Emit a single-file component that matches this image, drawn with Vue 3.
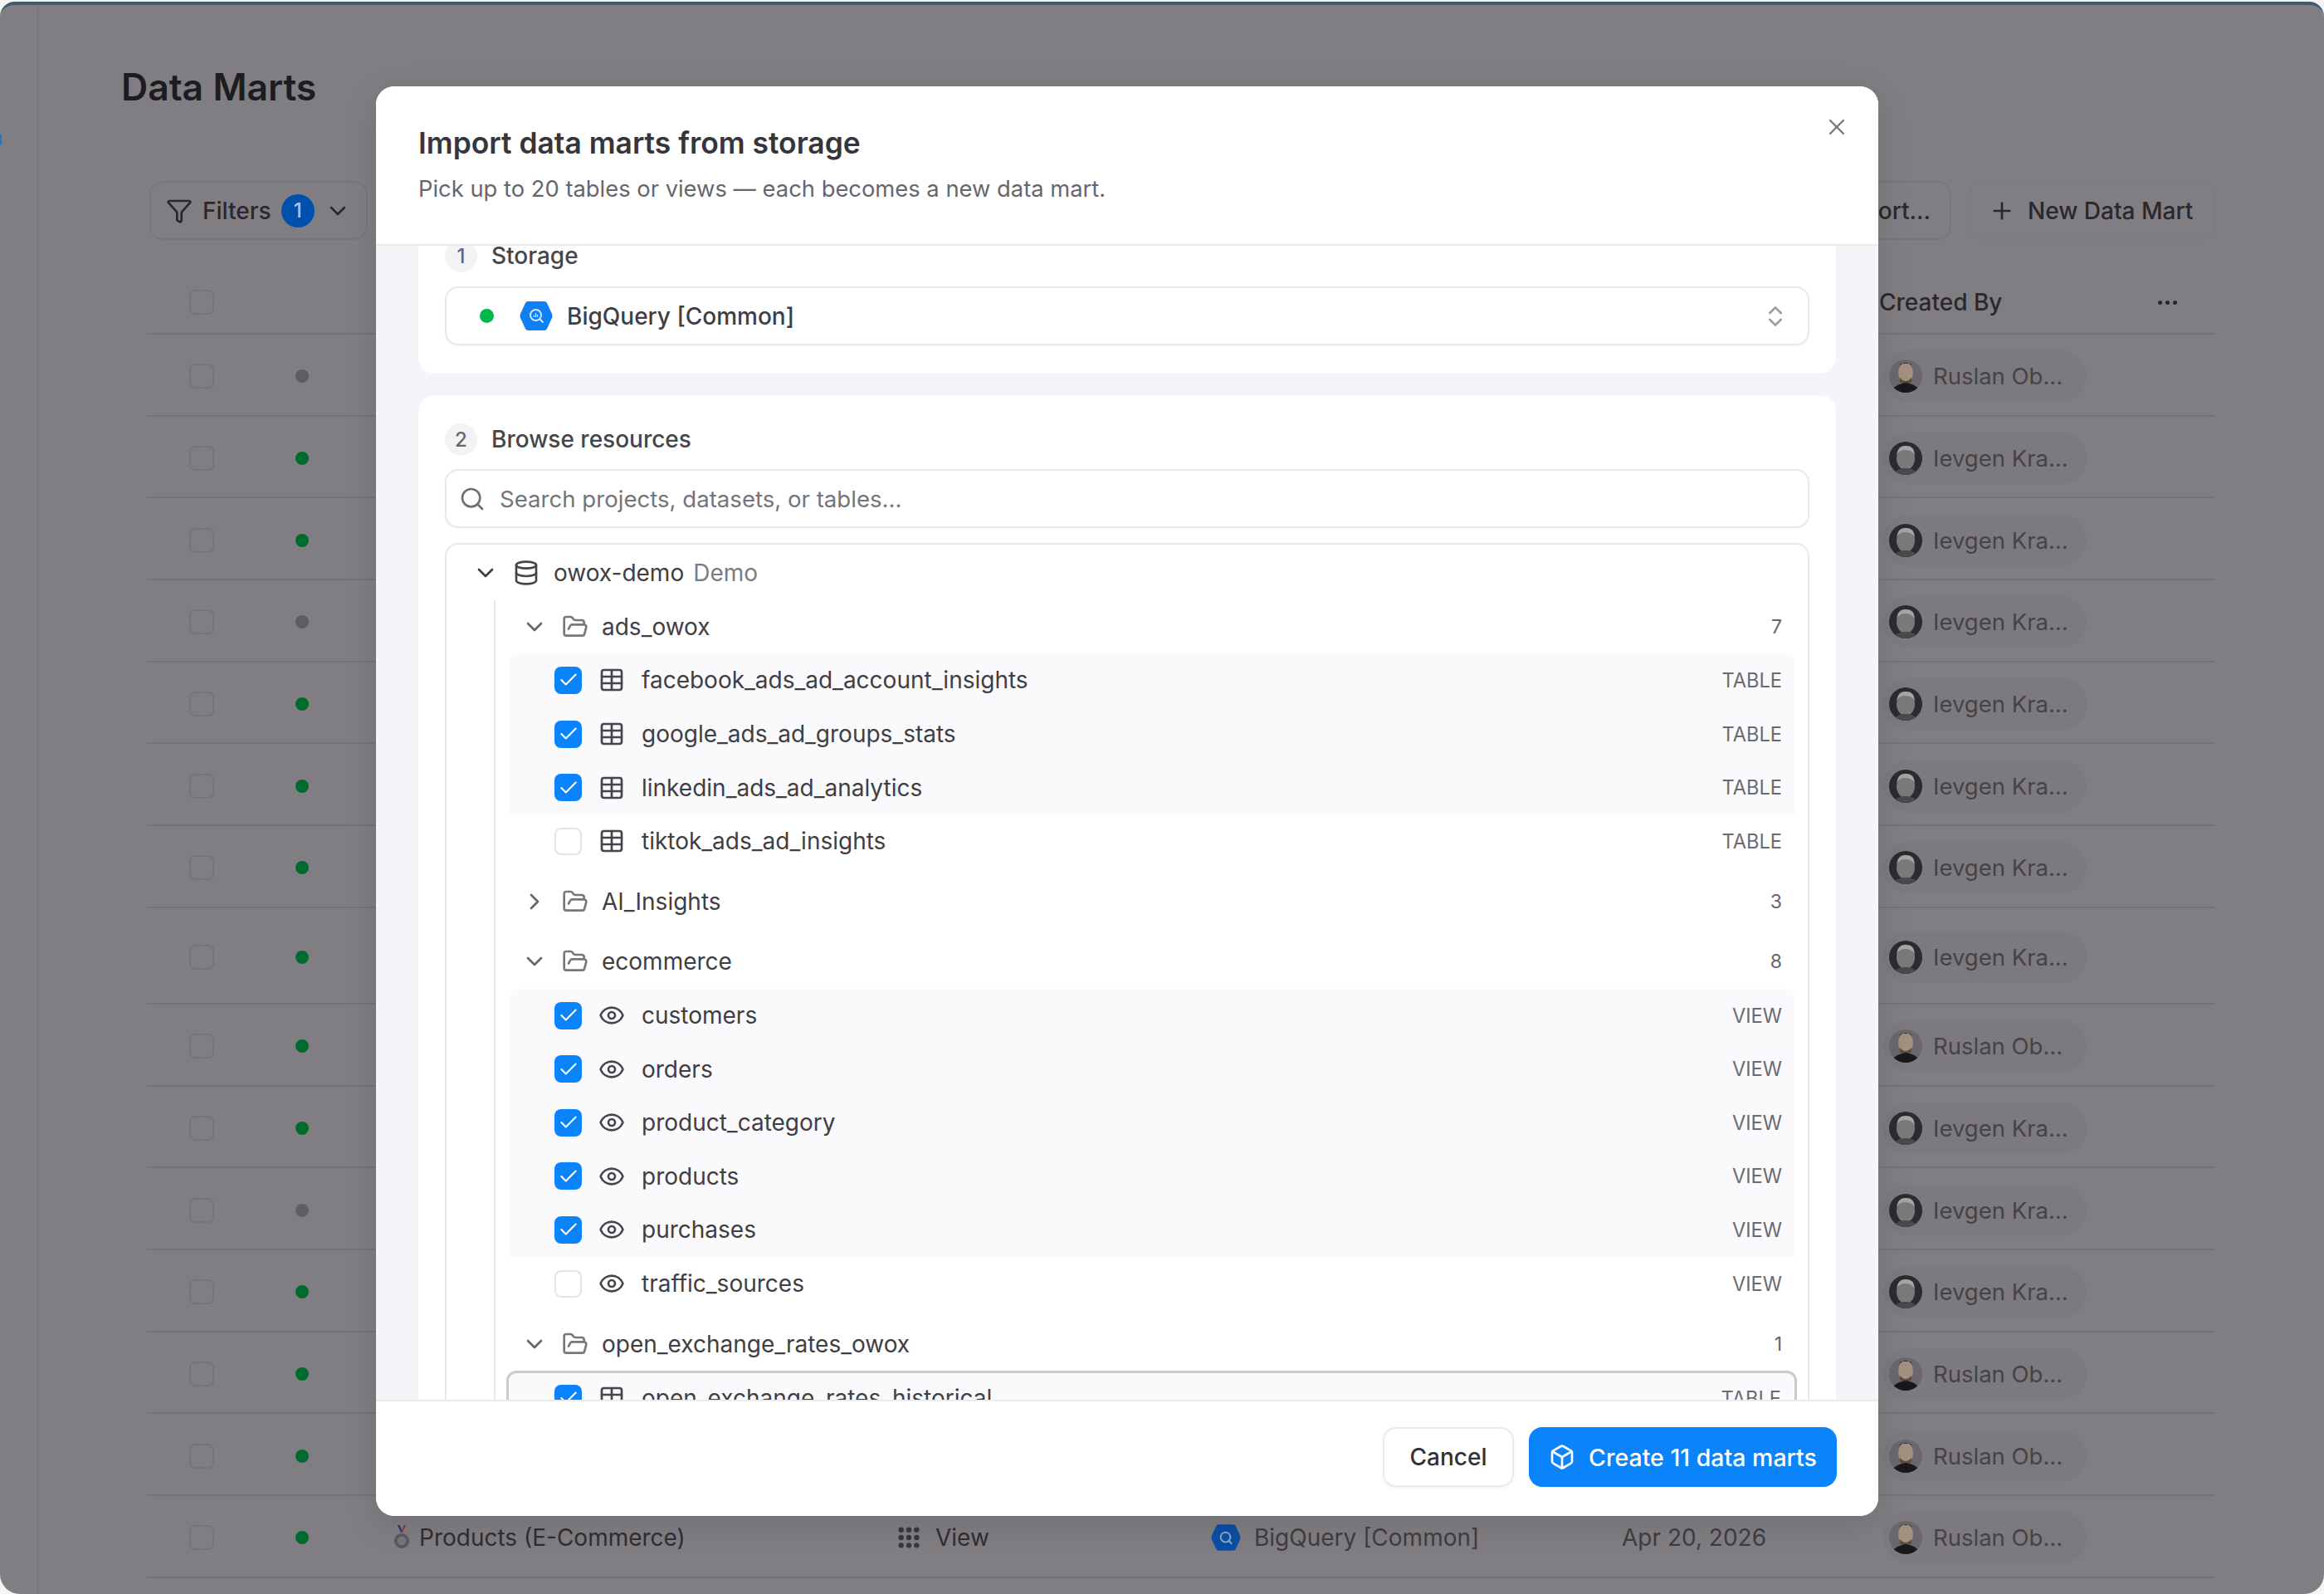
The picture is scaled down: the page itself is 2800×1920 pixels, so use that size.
<script setup>
import { h, ref, onMounted } from 'vue'

const icons = {
  chevDown: ['m6 9 6 6 6-6'],
  chevRight: ['m9 18 6-6-6-6'],
  upDown: ['m7 15 5 5 5-5', 'm7 9 5-5 5 5'],
  close: ['M18 6 6 18', 'm6 6 12 12'],
  plus: ['M5 12h14', 'M12 5v14'],
  search: ['m21 21-4.34-4.34', 'M19 11a8 8 0 1 1-16 0 8 8 0 0 1 16 0'],
  funnel: ['M10 20a1 1 0 0 0 .553.895l2 1A1 1 0 0 0 14 21v-7a2 2 0 0 1 .517-1.341L21.74 4.67A1 1 0 0 0 21 3H3a1 1 0 0 0-.742 1.67l7.225 7.989A2 2 0 0 1 10 14z'],
  database: ['M21 5a9 3 0 1 1-18 0 9 3 0 0 1 18 0', 'M3 5V19A9 3 0 0 0 21 19V5', 'M3 12A9 3 0 0 0 21 12'],
  folder: ['m6 14 1.5-2.9A2 2 0 0 1 9.24 10H20a2 2 0 0 1 1.94 2.5l-1.54 6a2 2 0 0 1-1.94 1.5H4a2 2 0 0 1-2-2V5a2 2 0 0 1 2-2h3.9a2 2 0 0 1 1.69.9l.81 1.2a2 2 0 0 0 1.67.9H18a2 2 0 0 1 2 2v2'],
  table: ['M12 3v18', 'M5 3h14a2 2 0 0 1 2 2v14a2 2 0 0 1-2 2H5a2 2 0 0 1-2-2V5a2 2 0 0 1 2-2z', 'M3 9h18', 'M3 15h18'],
  eye: ['M2.062 12.348a1 1 0 0 1 0-.696 10.75 10.75 0 0 1 19.876 0 1 1 0 0 1 0 .696 10.75 10.75 0 0 1-19.876 0', 'M15 12a3 3 0 1 1-6 0 3 3 0 0 1 6 0'],
  box: ['M21 8a2 2 0 0 0-1-1.73l-7-4a2 2 0 0 0-2 0l-7 4A2 2 0 0 0 3 8v8a2 2 0 0 0 1 1.73l7 4a2 2 0 0 0 2 0l7-4A2 2 0 0 0 21 16Z', 'm3.3 7 8.7 5 8.7-5', 'M12 22V12'],
  check: ['M20 6 9 17l-5-5'],
}

const Icon = (props) =>
  h(
    'svg',
    {
      viewBox: '0 0 24 24',
      width: props.size || 32,
      height: props.size || 32,
      fill: 'none',
      stroke: 'currentColor',
      'stroke-width': props.weight || 2,
      'stroke-linecap': 'round',
      'stroke-linejoin': 'round',
    },
    icons[props.name].map((d) => h('path', { d })),
  )
Icon.props = ['name', 'size', 'weight']

// Rows behind the dialog: only the last one shows more than status and owner.
const rows = [
  { on: false, owner: 'r' },
  { on: true, owner: 'i' },
  { on: true, owner: 'i' },
  { on: false, owner: 'i' },
  { on: true, owner: 'i' },
  { on: true, owner: 'i' },
  { on: true, owner: 'i' },
  { on: true, owner: 'i', tall: true },
  { on: true, owner: 'r' },
  { on: true, owner: 'i' },
  { on: false, owner: 'i' },
  { on: true, owner: 'i' },
  { on: true, owner: 'r' },
  { on: true, owner: 'r' },
  { on: true, owner: 'r', name: 'Products (E-Commerce)' },
]
const ownerName = { r: 'Ruslan Ob...', i: 'Ievgen Kra...' }

const groups = [
  {
    name: 'ads_owox',
    count: 7,
    open: true,
    items: [
      { name: 'facebook_ads_ad_account_insights', kind: 'TABLE', on: true },
      { name: 'google_ads_ad_groups_stats', kind: 'TABLE', on: true },
      { name: 'linkedin_ads_ad_analytics', kind: 'TABLE', on: true },
      { name: 'tiktok_ads_ad_insights', kind: 'TABLE', on: false },
    ],
  },
  { name: 'AI_Insights', count: 3, open: false, items: [] },
  {
    name: 'ecommerce',
    count: 8,
    open: true,
    items: [
      { name: 'customers', kind: 'VIEW', on: true },
      { name: 'orders', kind: 'VIEW', on: true },
      { name: 'product_category', kind: 'VIEW', on: true },
      { name: 'products', kind: 'VIEW', on: true },
      { name: 'purchases', kind: 'VIEW', on: true },
      { name: 'traffic_sources', kind: 'VIEW', on: false },
    ],
  },
  {
    name: 'open_exchange_rates_owox',
    count: 1,
    open: true,
    items: [{ name: 'open_exchange_rates_historical', kind: 'TABLE', on: true, focus: true }],
  },
]

// The dialog body is shown slightly scrolled, as in the reference.
const body = ref(null)
onMounted(() => {
  body.value.scrollTop = 41
})
</script>

<template>
  <div class="app">
    <aside class="rail"></aside>

    <main class="main">
      <h1 class="page-title">Data Marts</h1>

      <div class="toolbar">
        <button class="tool filters">
          <Icon name="funnel" />
          <span>Filters</span>
          <span class="count-badge">1</span>
          <Icon name="chevDown" />
        </button>
        <div class="toolbar-right">
          <button class="tool import">Import...</button>
          <button class="tool new-mart">
            <Icon name="plus" />
            <span>New Data Mart</span>
          </button>
        </div>
      </div>

      <div class="table">
        <div class="row head">
          <span class="cell-check"><i class="bg-check"></i></span>
          <span></span>
          <span></span>
          <span></span>
          <span></span>
          <span></span>
          <span class="th">Created By</span>
          <span class="dots"><i></i><i></i><i></i></span>
        </div>

        <div v-for="(r, i) in rows" :key="i" class="row" :class="{ tall: r.tall }">
          <span class="cell-check"><i class="bg-check"></i></span>
          <span class="cell-dot"><i class="status" :class="{ on: r.on }"></i></span>
          <span class="cell-name">
            <template v-if="r.name">
              <svg class="medal" viewBox="0 0 20 32" width="20" height="32">
                <path d="M5 1l4 9h2L7.5 1z" fill="#27307a" />
                <path d="M15 1l-4 9H9l3.5-9z" fill="#8a3a44" />
                <circle cx="10" cy="20" r="9" fill="#59575b" />
                <circle cx="10" cy="20" r="5.5" fill="#77757a" />
              </svg>
              <span class="cell-text">{{ r.name }}</span>
            </template>
          </span>
          <span class="cell-type">
            <template v-if="r.name">
              <svg viewBox="0 0 24 24" width="32" height="32" fill="#3a383c">
                <circle cx="5" cy="5" r="2.4" /><circle cx="12" cy="5" r="2.4" /><circle cx="19" cy="5" r="2.4" />
                <circle cx="5" cy="12" r="2.4" /><circle cx="12" cy="12" r="2.4" /><circle cx="19" cy="12" r="2.4" />
                <circle cx="5" cy="19" r="2.4" /><circle cx="12" cy="19" r="2.4" /><circle cx="19" cy="19" r="2.4" />
              </svg>
              <span class="cell-text">View</span>
            </template>
          </span>
          <span class="cell-storage">
            <template v-if="r.name">
              <svg viewBox="0 0 40 37" width="36" height="34">
                <path d="M10 1h20q2 0 3 2l6 13q1 2.500 0 5l-6 13q-1 2-3 2H10q-2 0-3-2L1 21q-1-2.500 0-5L7 3q1-2 3-2z" fill="#0b4fa6" />
                <circle cx="19.500" cy="18" r="6.500" fill="none" stroke="#8fa6c8" stroke-width="2.200" />
                <path d="M24 23l4 4" stroke="#8fa6c8" stroke-width="2.200" />
              </svg>
              <span class="cell-text dim">BigQuery [Common]</span>
            </template>
          </span>
          <span class="cell-date">{{ r.name ? 'Apr 20, 2026' : '' }}</span>
          <span class="owner">
            <svg v-if="r.owner === 'r'" class="avatar" viewBox="0 0 40 40" width="40" height="40">
              <rect width="40" height="40" fill="#6a686c" />
              <ellipse cx="20" cy="16" rx="9" ry="12" fill="#a4907f" />
              <path d="M12 8q8-8 16 0l-2-3H14z" fill="#2d2a28" />
              <path d="M13 22q7 8 14 0v5q-7 5-14 0z" fill="#5b4a3e" />
              <path d="M3 40q2-10 17-12 15 2 17 12z" fill="#19181a" />
            </svg>
            <svg v-else class="avatar" viewBox="0 0 40 40" width="40" height="40">
              <rect width="40" height="40" fill="#2c2b2e" />
              <ellipse cx="20" cy="20" rx="11" ry="14" fill="#7a797c" />
              <path d="M9 16q2-12 11-11 10-1 11 11-4-6-11-6-8 0-11 6z" fill="#a5a4a7" />
              <path d="M6 40q2-8 14-8t14 8z" fill="#4a494c" />
            </svg>
            <span class="owner-name">{{ ownerName[r.owner] }}</span>
          </span>
          <span></span>
        </div>
      </div>
    </main>

    <section class="modal" role="dialog">
      <button class="close"><Icon name="close" :size="32" :weight="1.7" /></button>

      <header class="modal-head">
        <h2 class="modal-title">Import data marts from storage</h2>
        <p class="modal-sub">Pick up to 20 tables or views — each becomes a new data mart.</p>
      </header>

      <div ref="body" class="modal-body">
        <div class="card card-storage">
          <div class="step"><span class="step-no">1</span><span class="step-label">Storage</span></div>
          <div class="field select">
            <i class="live-dot"></i>
            <svg class="bq" viewBox="0 0 40 37" width="40" height="37">
              <path d="M10 1h20q2 0 3 2l6 13q1 2.500 0 5l-6 13q-1 2-3 2H10q-2 0-3-2L1 21q-1-2.500 0-5L7 3q1-2 3-2z" fill="#0f7ff5" />
              <circle cx="19.500" cy="17.500" r="6.500" fill="none" stroke="#d6e8ff" stroke-width="2" />
              <path d="M24.500 22.500l3.500 3.500" stroke="#d6e8ff" stroke-width="2" stroke-linecap="round" />
              <path d="M17.500 20v-2M19.500 20v-5M21.500 20v-3" stroke="#d6e8ff" stroke-width="1.300" />
            </svg>
            <span class="select-text">BigQuery [Common]</span>
            <Icon class="updown" name="upDown" />
          </div>
        </div>

        <div class="card">
          <div class="step"><span class="step-no">2</span><span class="step-label">Browse resources</span></div>
          <div class="field search">
            <Icon class="search-icon" name="search" />
            <span class="placeholder">Search projects, datasets, or tables...</span>
          </div>

          <div class="tree">
            <div class="project-row">
              <Icon class="chev-dark" name="chevDown" />
              <Icon class="node-icon" name="database" />
              <span class="node-name">owox-demo</span>
              <span class="project-tag">Demo</span>
            </div>

            <div class="children">
              <div v-for="g in groups" :key="g.name" class="group">
                <div class="group-row">
                  <Icon class="chev" :name="g.open ? 'chevDown' : 'chevRight'" />
                  <Icon class="folder" name="folder" />
                  <span class="node-name">{{ g.name }}</span>
                  <span class="meta">{{ g.count }}</span>
                </div>
                <div
                  v-for="t in g.items"
                  :key="t.name"
                  class="item"
                  :class="{ selected: t.on, focused: t.focus }"
                >
                  <span class="box" :class="{ checked: t.on }">
                    <Icon v-if="t.on" name="check" :size="26" :weight="1.9" />
                  </span>
                  <Icon class="node-icon" :name="t.kind === 'TABLE' ? 'table' : 'eye'" />
                  <span class="node-name">{{ t.name }}</span>
                  <span class="meta kind">{{ t.kind }}</span>
                </div>
              </div>
            </div>
          </div>
        </div>
      </div>

      <footer class="modal-foot">
        <button class="btn cancel">Cancel</button>
        <button class="btn primary">
          <Icon name="box" />
          <span>Create 11 data marts</span>
        </button>
      </footer>
    </section>
  </div>
</template>

<style>
html,
body {
  background: #f4f4f4;
}
</style>

<style scoped>
.app {
  position: relative;
  display: flex;
  box-sizing: border-box;
  width: 2800px;
  height: 1918px;
  margin-top: 2px;
  border-top: 4px solid #3d5a70;
  border-radius: 18px 18px 24px 24px;
  overflow: hidden;
  background: #807e82;
  font-family: Inter, 'Liberation Sans', sans-serif;
  color: #3a383c;
}
button {
  font: inherit;
  background: none;
  border: none;
  padding: 0;
  color: inherit;
}

.rail {
  flex: 0 0 47px;
  border-right: 2px solid #7a787c;
  box-sizing: border-box;
}
.rail::before {
  content: '';
  position: absolute;
  left: 0;
  top: 156px;
  width: 2px;
  height: 13px;
  background: #1e78c8;
}
.main {
  flex: 1;
  min-width: 0;
  padding: 69px 131px 0 99px;
}
.page-title {
  margin: 0;
  font-size: 44.5px;
  line-height: 60px;
  font-weight: 600;
  color: #1d1c20;
}

.toolbar {
  display: flex;
  justify-content: space-between;
  margin: 83px 0 0 34px;
}
.toolbar-right {
  display: flex;
  gap: 21px;
}
.tool {
  display: flex;
  align-items: center;
  box-sizing: border-box;
  height: 71px;
  border: 2px solid #79777b;
  border-radius: 16px;
  font-size: 28px;
  font-weight: 500;
  color: #2a282c;
}
.filters {
  gap: 12px;
  width: 263px;
  padding-left: 18px;
}
.count-badge {
  display: grid;
  place-items: center;
  width: 40px;
  height: 40px;
  border-radius: 50%;
  background: #0050ad;
  color: #a9c4e4;
  font-size: 24px;
}
.import {
  width: 300px;
  padding-right: 23px;
  justify-content: flex-end;
}
.new-mart {
  gap: 15px;
  width: 297px;
  padding-left: 22px;
  border-color: #7d7b7f;
}

.table {
  margin: 34px 0 0 31px;
}
.row {
  display: grid;
  grid-template-columns: 132px 110px 660px 380px 495px 310px 310px 93px;
  align-items: center;
  box-sizing: border-box;
  height: 98.7px;
  padding-top: 4px;
  border-bottom: 2px solid #757377;
  font-size: 28px;
}
.row.head {
  height: 80px;
}
.row.tall {
  height: 116px;
}
.cell-check,
.cell-dot {
  display: grid;
  place-items: center;
}
.bg-check {
  display: block;
  box-sizing: border-box;
  width: 30px;
  height: 30px;
  border: 2px solid #767478;
  border-radius: 7px;
}
.status {
  display: block;
  width: 16px;
  height: 16px;
  border-radius: 50%;
  background: #5f5d61;
}
.status.on {
  background: #006b2e;
}
.cell-name,
.cell-type,
.cell-storage {
  display: flex;
  align-items: center;
}
.cell-name {
  padding-left: 55px;
  gap: 11px;
}
.cell-type {
  gap: 16px;
}
.cell-storage {
  gap: 16px;
}
.cell-text {
  color: #302e32;
}
.cell-text.dim,
.cell-date {
  color: #3f3d41;
}
.th {
  font-weight: 500;
  color: #2a282c;
}
.dots {
  display: flex;
  justify-content: center;
  gap: 4px;
  padding-right: 18px;
}
.dots i {
  width: 5px;
  height: 5px;
  border-radius: 50%;
  background: #2a282c;
}
.owner {
  display: flex;
  align-items: center;
  gap: 13px;
  box-sizing: border-box;
  width: 245px;
  height: 62px;
  margin-left: 5px;
  padding-left: 7px;
  border-radius: 31px;
  background: #7c7a7e;
}
.owner-name {
  font-size: 27.5px;
  color: #454347;
}
.avatar {
  border-radius: 50%;
  flex: none;
}

/* dialog */
.modal {
  position: absolute;
  left: 453px;
  top: 98px;
  display: flex;
  flex-direction: column;
  width: 1810px;
  height: 1722px;
  border-radius: 22px;
  overflow: hidden;
  background: #f5f4f8;
  box-shadow: 0 10px 40px rgba(0, 0, 0, 0.12);
}
.close {
  position: absolute;
  right: 34px;
  top: 33px;
  color: #77777d;
  line-height: 0;
}
.modal-head {
  flex: none;
  box-sizing: border-box;
  height: 192px;
  padding: 45px 51px 0;
  background: #fff;
  border-bottom: 2px solid #ebebee;
}
.modal-title {
  margin: 0;
  font-size: 35.4px;
  line-height: 48px;
  font-weight: 600;
  color: #36353b;
}
.modal-sub {
  margin: 13px 0 0;
  font-size: 27.35px;
  line-height: 36px;
  color: #66666d;
}
.modal-body {
  flex: 1;
  min-height: 0;
  overflow: hidden;
  padding: 0 51px;
  display: flex;
  flex-direction: column;
  gap: 26px;
}
.card {
  flex: none;
  box-sizing: border-box;
  padding: 33px 32px 24px;
  border-radius: 20px;
  background: #fff;
}
.card-storage {
  height: 195px;
}
.step {
  display: flex;
  align-items: center;
  gap: 17px;
  height: 40px;
}
.step-no {
  display: grid;
  place-items: center;
  width: 39px;
  height: 39px;
  border-radius: 50%;
  background: #f3f3f6;
  font-size: 24px;
  font-weight: 500;
  color: #66666d;
}
.step-label {
  font-size: 28px;
  font-weight: 500;
  color: #45454b;
}
.field {
  display: flex;
  align-items: center;
  box-sizing: border-box;
  height: 71px;
  margin-top: 16px;
  border: 2px solid #e8e8ec;
  border-radius: 16px;
  background: #fff;
  box-shadow: 0 1px 3px rgba(0, 0, 0, 0.04);
}
.select {
  margin-top: 17px;
  padding: 0 23px 0 40px;
}
.live-dot {
  width: 17px;
  height: 17px;
  border-radius: 50%;
  background: #00b84a;
}
.bq {
  margin-left: 31px;
}
.select-text {
  margin-left: 17px;
  font-size: 28px;
  font-weight: 500;
  color: #3f3e44;
}
.updown {
  margin-left: auto;
  color: #9b9ba1;
}
.search {
  padding-left: 15px;
  gap: 17px;
}
.search-icon {
  color: #6e6e74;
}
.placeholder {
  font-size: 27.6px;
  color: #74747b;
}

.tree {
  margin-top: 18px;
  padding-top: 2px;
  border: 2px solid #e8e8ec;
  border-radius: 16px 16px 0 0;
  color: #3f3e44;
}
.project-row,
.group-row,
.item {
  display: flex;
  align-items: center;
  box-sizing: border-box;
  height: 64.6px;
}
.project-row {
  gap: 17px;
  padding-left: 31px;
}
.node-name {
  font-size: 28px;
}
.chev-dark {
  color: #3f3e44;
}
.node-icon {
  flex: none;
  color: #46454b;
}
.project-tag {
  margin-left: -6px;
  font-size: 28px;
  color: #7b7b82;
}
.children {
  margin-left: 57px;
  border-left: 2px solid #e8e8ec;
}
.group {
  margin-bottom: 8px;
}
.group-row {
  gap: 16.5px;
  padding: 0 31px 0 31px;
}
.chev {
  color: #66666d;
}
.folder {
  color: #77777d;
}
.meta {
  margin-left: auto;
  font-size: 23px;
  color: #66666d;
}
.item {
  gap: 20px;
  margin: 0 15px 0 16px;
  padding: 0 16px 0 55px;
}
.item.selected {
  background: #faf9fc;
}
.group-row + .item {
  border-radius: 12px 12px 0 0;
}
.kind {
  font-size: 23.6px;
  color: #6b6b72;
}
.box {
  flex: none;
  display: grid;
  place-items: center;
  box-sizing: border-box;
  width: 33px;
  height: 33px;
  border: 2px solid #e4e4e8;
  border-radius: 8px;
  background: #fff;
}
.box.checked {
  border: none;
  background: #0b84fb;
  color: #fff;
}
.item.focused {
  box-sizing: content-box;
  height: 61px;
  border: 3px solid #cbcbcf;
  border-radius: 12px;
  margin-left: 13px;
  margin-right: 13px;
}

.modal-foot {
  flex: none;
  display: flex;
  justify-content: flex-end;
  gap: 18px;
  box-sizing: border-box;
  height: 140px;
  padding: 31px 50px 0;
  background: #fff;
  border-top: 2px solid #ebebee;
}
.btn {
  display: flex;
  align-items: center;
  justify-content: center;
  height: 72px;
  border-radius: 16px;
  font-size: 28px;
  font-weight: 500;
}
.cancel {
  width: 158px;
  border: 2px solid #ebebee;
  background: #fff;
  color: #323136;
  box-shadow: 0 2px 4px rgba(0, 0, 0, 0.05);
}
.primary {
  gap: 16px;
  width: 371px;
  background: #0b84fb;
  color: #fff;
  font-size: 28.5px;
}
</style>
